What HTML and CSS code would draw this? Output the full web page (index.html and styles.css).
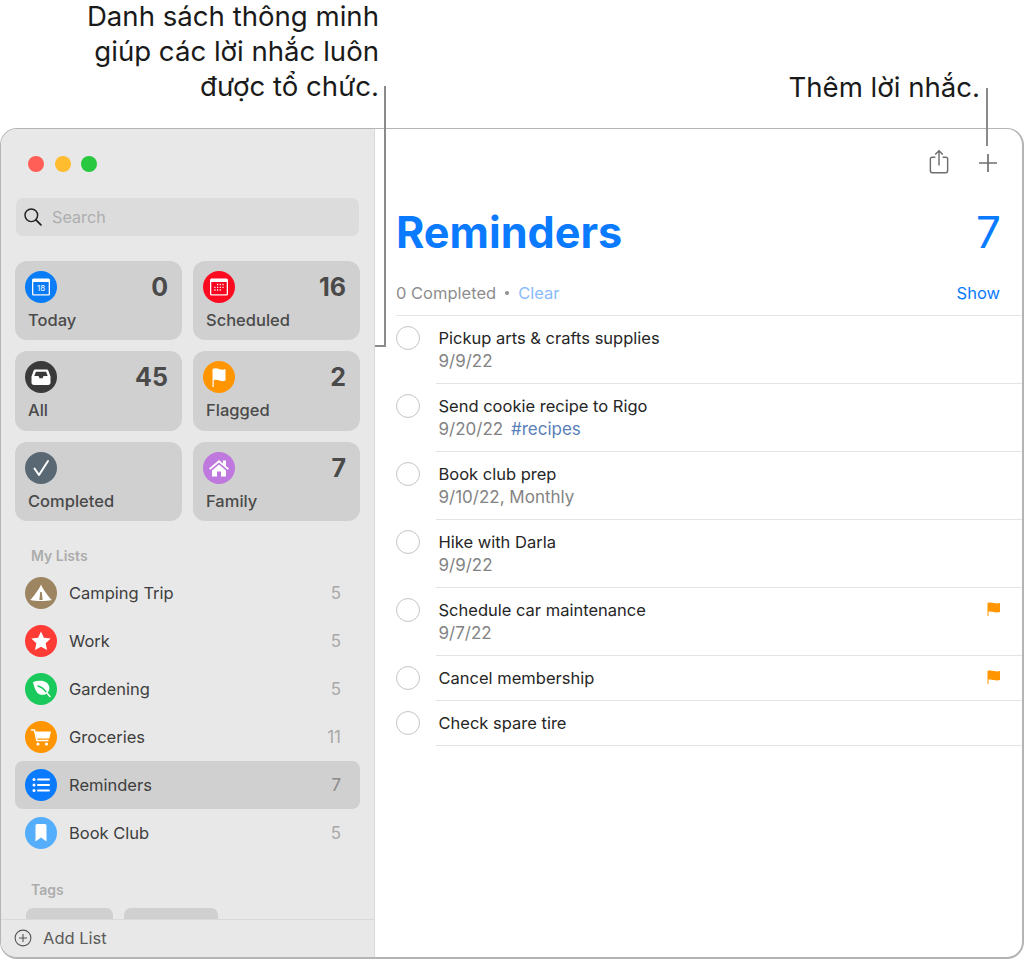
FILE: index.html
```html
<!DOCTYPE html>
<html lang="vi">
<head>
<meta charset="utf-8">
<title>Reminders</title>
<link rel="stylesheet" href="styles.css">
</head>
<body>
<header class="notes">
  <p class="note note-left">Danh sách thông minh<br>giúp các lời nhắc luôn<br>được tổ chức.</p>
  <p class="note note-right">Thêm lời nhắc.</p>
</header>
<div class="callout callout-lists"></div>
<div class="callout callout-add"></div>
<div class="window">
  <aside class="sidebar">
    <div class="sidebar-scroll">
      <div class="lights"><span class="light red"></span><span class="light yellow"></span><span class="light green"></span></div>
      <div class="search">
        <svg class="search-icon" viewBox="1 1 16 16"><circle cx="7.5" cy="7.5" r="5.600" fill="none" stroke="#222" stroke-width="1.300"/><path d="M11.600 11.600 16 16" stroke="#222" stroke-width="1.600" stroke-linecap="round"/></svg>
        <span>Search</span>
      </div>
      <div class="cards">
        <div class="card">
          <div class="card-top">
            <span class="icon blue"><svg viewBox="0 0 32 32"><rect x="7" y="7.500" width="18" height="17" rx="1.500" fill="#fff"/><rect x="8.300" y="11" width="15.400" height="12.300" fill="#0a7cf5"/><text x="16" y="20" text-anchor="middle" class="cal-num">18</text></svg></span>
            <span class="card-count">0</span>
          </div>
          <div class="card-label">Today</div>
        </div>
        <div class="card">
          <div class="card-top">
            <span class="icon red-bg"><svg viewBox="0 0 32 32"><rect x="7" y="7.500" width="18" height="17" rx="1.500" fill="#fff"/><rect x="8.300" y="11" width="15.400" height="12.300" fill="#f5051d"/><path d="M14 13.500h1.200M16.700 13.500h1.200M19.400 13.500h1.200M11.300 16.300h1.200M14 16.300h1.200M16.700 16.300h1.200M19.400 16.300h1.200M11.300 19h1.200M14 19h1.200M16.700 19h1.200" stroke="#fff" stroke-width="1.300"/></svg></span>
            <span class="card-count">16</span>
          </div>
          <div class="card-label">Scheduled</div>
        </div>
        <div class="card">
          <div class="card-top">
            <span class="icon dark"><svg viewBox="0 0 32 32"><path d="M10.500 8.500h11c1 0 1.500.4 2 1.400l2 5.600v6c0 1.500-.8 2.500-2.500 2.500H9c-1.700 0-2.500-1-2.500-2.500v-6l2-5.600c.5-1 1-1.400 2-1.400Z" fill="#fff"/><path d="M9.300 15h4.200l1 2.200h3l1-2.200h4.200l-1.600-4.200H10.900Z" fill="#3a3a3a"/></svg></span>
            <span class="card-count">45</span>
          </div>
          <div class="card-label">All</div>
        </div>
        <div class="card">
          <div class="card-top">
            <span class="icon orange"><svg viewBox="0 0 32 32"><path d="M9.500 8c3-1.200 5-.5 7 .2 2 .6 4 .7 6-.2v11.500c-2 .9-4 .8-6 .1-2-.7-4-1.200-5.800-.4V26H9.500Z" fill="#fff"/></svg></span>
            <span class="card-count">2</span>
          </div>
          <div class="card-label">Flagged</div>
        </div>
        <div class="card">
          <div class="card-top">
            <span class="icon slate"><svg viewBox="0 0 32 32"><path d="M9.500 16.500l4.500 6.500L23 9" fill="none" stroke="#fff" stroke-width="2" stroke-linecap="round" stroke-linejoin="round"/></svg></span>
            <span class="card-count"></span>
          </div>
          <div class="card-label">Completed</div>
        </div>
        <div class="card">
          <div class="card-top">
            <span class="icon purple"><svg viewBox="0 0 32 32"><path d="M6 16.500 16 8l4 3.400V8.500h3v5.500l3 2.500-1.300 1.300L16 10.400 7.300 17.800Z" fill="#fff"/><path d="M9 18.500 16 12.500l7 6V24.500H18V19.500H14V24.500H9Z" fill="#fff"/></svg></span>
            <span class="card-count">7</span>
          </div>
          <div class="card-label">Family</div>
        </div>
      </div>
      <h2 class="section-title">My Lists</h2>
      <ul class="lists">
        <li class="list-row">
          <span class="icon tan"><svg viewBox="0 0 32 32"><path d="M16 7.500c1.500 3.500 5.500 10 10.800 15.500-3 .8-7 1-10.800 1s-7.800-.2-10.800-1C10.500 17.500 14.500 11 16 7.500Z" fill="#fff"/><path d="M15.200 15h1.600l.8 8h-3.200Z" fill="#9c8560"/></svg></span>
          <span class="list-name">Camping Trip</span><span class="list-count">5</span>
        </li>
        <li class="list-row">
          <span class="icon coral"><svg viewBox="0 0 32 32"><path d="M16 6.500l2.900 6.300 6.800.8-5 4.700 1.300 6.800-6-3.400-6 3.400 1.300-6.800-5-4.700 6.800-.8Z" fill="#fff"/></svg></span>
          <span class="list-name">Work</span><span class="list-count">5</span>
        </li>
        <li class="list-row">
          <span class="icon leaf"><svg viewBox="0 0 32 32"><path d="M8 9c6-2 14-2 16 4 1 3 0 6-3 8-3 1.500-7 1-9-1.500C10 17 9 13 8 9Z" fill="#fff"/><path d="M13 13c3 1 6 3 8.500 6.500" fill="none" stroke="#1ac95c" stroke-width="1.400" stroke-linecap="round"/><path d="M21.500 19.500l3.500 4" stroke="#fff" stroke-width="1.500" stroke-linecap="round"/></svg></span>
          <span class="list-name">Gardening</span><span class="list-count">5</span>
        </li>
        <li class="list-row">
          <span class="icon orange"><svg viewBox="0 0 32 32"><path d="M6.500 9h3l2.400 10.500H23" fill="none" stroke="#fff" stroke-width="1.500" stroke-linecap="round" stroke-linejoin="round"/><path d="M10.500 10.500H26l-1.700 7H12Z" fill="#fff"/><circle cx="13" cy="23" r="1.600" fill="#fff"/><circle cx="21.500" cy="23" r="1.600" fill="#fff"/></svg></span>
          <span class="list-name">Groceries</span><span class="list-count">11</span>
        </li>
        <li class="list-row selected">
          <span class="icon blue-list"><svg viewBox="0 0 32 32"><path d="M13 10.500h11M13 16h11M13 21.500h11" stroke="#fff" stroke-width="2" stroke-linecap="round"/><circle cx="9" cy="10.500" r="1.500" fill="#fff"/><circle cx="9" cy="16" r="1.500" fill="#fff"/><circle cx="9" cy="21.500" r="1.500" fill="#fff"/></svg></span>
          <span class="list-name">Reminders</span><span class="list-count">7</span>
        </li>
        <li class="list-row">
          <span class="icon sky"><svg viewBox="0 0 32 32"><path d="M12 7h8a1.500 1.500 0 0 1 1.500 1.500V24.500L16 20.500l-5.500 4V8.500A1.500 1.500 0 0 1 12 7Z" fill="#fff"/></svg></span>
          <span class="list-name">Book Club</span><span class="list-count">5</span>
        </li>
      </ul>
      <h2 class="section-title tags-title">Tags</h2>
      <div class="tags"><span class="tag tag-a"></span><span class="tag tag-b"></span></div>
    </div>
    <footer class="add-list">
      <svg viewBox="0 0 18 18"><circle cx="9" cy="9" r="7.900" fill="none" stroke="#555" stroke-width="1.100"/><path d="M9 5v8M5 9h8" stroke="#555" stroke-width="1.100"/></svg>
      <span>Add List</span>
    </footer>
  </aside>
  <main class="main">
    <div class="toolbar">
      <svg class="share" viewBox="0 0 22 28"><path d="M7 9H3.500A2 2 0 0 0 1.500 11v13a2 2 0 0 0 2 2h15a2 2 0 0 0 2-2V11a2 2 0 0 0-2-2H15" fill="none" stroke="#6f6f6f" stroke-width="1.600"/><path d="M11 18V2M6.800 6 11 1.800 15.200 6" fill="none" stroke="#6f6f6f" stroke-width="1.600"/></svg>
      <svg class="plus" viewBox="0 0 20 20"><path d="M10 1v18M1 10h18" stroke="#6f6f6f" stroke-width="1.700"/></svg>
    </div>
    <div class="title-row"><h1>Reminders</h1><span class="title-count">7</span></div>
    <div class="completed-row">
      <span class="completed">0 Completed</span><span class="dot"></span><span class="clear">Clear</span>
      <span class="show">Show</span>
    </div>
    <ul class="items">
      <li class="item"><span class="check"></span><div class="item-body"><div class="item-title">Pickup arts &amp; crafts supplies</div><div class="item-sub">9/9/22</div></div></li>
      <li class="item"><span class="check"></span><div class="item-body"><div class="item-title">Send cookie recipe to Rigo</div><div class="item-sub">9/20/22 <span class="hash">#recipes</span></div></div></li>
      <li class="item"><span class="check"></span><div class="item-body"><div class="item-title">Book club prep</div><div class="item-sub">9/10/22, Monthly</div></div></li>
      <li class="item"><span class="check"></span><div class="item-body"><div class="item-title">Hike with Darla</div><div class="item-sub">9/9/22</div></div></li>
      <li class="item"><span class="check"></span><div class="item-body"><div class="item-title">Schedule car maintenance</div><div class="item-sub">9/7/22</div>
        <svg class="flag" viewBox="0 0 14 14"><path d="M.5 1c2-.7 4-.6 6.500 0s3.800.5 6 0v9c-2 .6-4 .6-6.500 0S3 9.300 1.500 9.800V14H.5Z" fill="#ff9500"/></svg></div></li>
      <li class="item short"><span class="check"></span><div class="item-body"><div class="item-title">Cancel membership</div>
        <svg class="flag" viewBox="0 0 14 14"><path d="M.5 1c2-.7 4-.6 6.500 0s3.800.5 6 0v9c-2 .6-4 .6-6.500 0S3 9.300 1.500 9.800V14H.5Z" fill="#ff9500"/></svg></div></li>
      <li class="item short"><span class="check"></span><div class="item-body"><div class="item-title">Check spare tire</div></div></li>
    </ul>
  </main>
</div>
</body>
</html>
```
FILE: styles.css
```css
* { box-sizing: border-box; }
html, body { margin: 0; padding: 0; }
body {
  width: 1027px;
  height: 960px;
  overflow: hidden;
  position: relative;
  background: #fff;
  font-family: Inter, "Noto Sans", "Liberation Sans", sans-serif;
  color: #262626;
}
ul { list-style: none; margin: 0; padding: 0; }
h1, h2, p { margin: 0; }

.notes {
  height: 128px;
  display: flex;
  justify-content: space-between;
  padding-right: 47px;
  font-size: 27.600px;
  line-height: 35px;
  color: #1a1a1a;
}
.note-left { width: 379px; margin-top: -1px; text-align: right; }
.note-right { padding-top: 69.500px; text-align: right; }

.callout { position: absolute; border-color: #8a8a8a; border-style: solid; border-width: 0; }
.callout-lists { left: 375px; top: 86px; width: 11px; height: 261px; border-right-width: 2px; border-bottom-width: 2px; }
.callout-add { left: 986px; top: 88px; width: 2px; height: 58px; border-right-width: 2px; }

.window {
  width: 1024px;
  height: 831px;
  display: flex;
  border: 2px solid #b4b4b4;
  border-top-width: 1px;
  border-left-width: 1px;
  border-radius: 17px;
  overflow: hidden;
  background: #fff;
}

.sidebar {
  width: 374px;
  flex: none;
  display: flex;
  flex-direction: column;
  background: #e8e8e8;
  border-right: 1px solid #d9d9d9;
}
.sidebar-scroll { flex: 1; overflow: hidden; padding: 0 14px; min-height: 0; }
.lights { display: flex; gap: 10.500px; padding: 27px 0 0 13px; height: 69px; }
.light { width: 16px; height: 16px; border-radius: 50%; }
.light.red { background: #ff5f57; }
.light.yellow { background: #febc2e; }
.light.green { background: #28c840; }

.search {
  height: 38px;
  margin: 0 1px;
  display: flex;
  align-items: center;
  gap: 10px;
  padding-left: 8px;
  background: #dcdcdc;
  border-radius: 7px;
  color: #aeaeae;
  font-size: 16.200px;
}
.search-icon { width: 18px; height: 18px; flex: none; }

.cards {
  margin-top: 24.800px;
  display: grid;
  grid-template-columns: 167px 167px;
  grid-auto-rows: 79.500px;
  gap: 11px;
}
.card {
  background: #d0d0d0;
  border-radius: 12px;
  padding: 10px 14px 0 10px;
}
.card-top { display: flex; justify-content: space-between; height: 32px; }
.card-count { font-size: 25px; line-height: 33px; font-weight: 700; color: #4a4a4a; }
.card-label { margin: 7px 0 0 3px; font-size: 16.500px; line-height: 20px; font-weight: 500; color: #4a4a4a; }

.icon { width: 32px; height: 32px; border-radius: 50%; flex: none; display: block; }
.icon svg { display: block; width: 32px; height: 32px; }
.cal-num { font-size: 8px; fill: #fff; font-family: Inter, sans-serif; }
.blue { background: #0a7cf5; }
.red-bg { background: #fb0a20; }
.dark { background: #3a3a3a; }
.orange { background: #ff9500; }
.slate { background: #5a6873; }
.purple { background: #bf78de; }
.tan { background: #9c8560; }
.coral { background: #ff3b35; }
.leaf { background: #1ac95c; }
.blue-list { background: #0a7aff; }
.sky { background: #55aefb; }

.section-title { font-size: 14px; line-height: 18px; font-weight: 600; color: #acacac; padding-left: 16px; }
.cards + .section-title { margin-top: 25.500px; }
.lists { margin-top: 4px; }
.list-row {
  height: 48px;
  display: flex;
  align-items: center;
  padding: 0 19px 0 10px;
  border-radius: 8px;
  font-size: 16.500px;
  color: #3e3e3e;
}
.list-name { margin-left: 12px; flex: 1; }
.list-count { color: #a8a8a8; font-size: 17px; }
.list-row.selected { background: #d0d0d0; }
.list-row.selected .list-count { color: #8a8a8a; }
.tags-title { margin-top: 24px; }
.tags { display: flex; gap: 11px; margin: 9px 0 0 11px; }
.tag { height: 30px; border-radius: 7px; background: #d0d0d0; }
.tag-a { width: 87px; }
.tag-b { width: 94px; }

.add-list {
  height: 38px;
  flex: none;
  display: flex;
  align-items: center;
  gap: 11px;
  padding: 0 0 2px 13px;
  border-top: 1px solid #d9d9d9;
  font-size: 16.500px;
  color: #5a5a5a;
}
.add-list svg { width: 18px; height: 18px; }

.main { flex: 1; min-width: 0; padding-left: 21px; }
.toolbar { height: 61px; display: flex; align-items: flex-start; justify-content: flex-end; }
.share { width: 20px; height: 25.500px; margin: 20px 29px 0 0; }
.plus { width: 20px; height: 20px; margin: 24px 24.500px 0 0; }
.title-row { height: 84px; display: flex; justify-content: space-between; align-items: center; padding-right: 21px; color: #0a7aff; }
h1 { font-size: 43.200px; line-height: 84px; font-weight: 700; }
.title-count { font-size: 44px; font-weight: 400; }
.completed-row { height: 42px; display: flex; align-items: center; padding: 0 22px 4px 0; font-size: 16.500px; color: #8e8e8e; border-bottom: 1px solid #e5e5e5; }
.dot { width: 4px; height: 4px; border-radius: 50%; background: #8e8e8e; margin: 0 9px; }
.clear { color: #8abcfb; }
.show { margin-left: auto; color: #0a7aff; }

.item { display: flex; height: 68px; }
.item.short { height: 45px; }
.check { width: 24px; height: 24px; border: 1.500px solid #c4c4c4; border-radius: 50%; flex: none; margin: 10px 16px 0 0; }
.item-body { flex: 1; position: relative; border-bottom: 1px solid #e3e3e3; padding: 11px 0 0 2.500px; font-size: 16.500px; line-height: 23px; }
.item-title { color: #262626; }
.item-sub { color: #838383; font-size: 17px; }
.hash { margin-left: 3px; color: #5a7fb8; }
.flag { position: absolute; right: 21px; top: 14px; width: 14px; height: 14px; }
```
